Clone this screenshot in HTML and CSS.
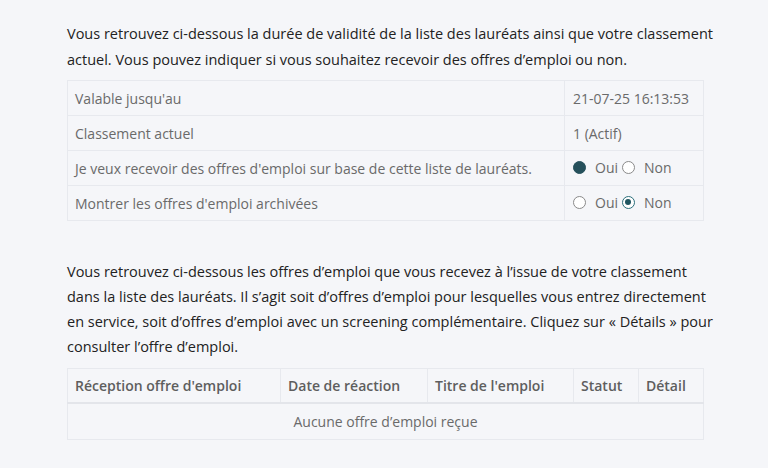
FILE: index.html
```html
<!DOCTYPE html>
<html lang="fr">
<head>
<meta charset="utf-8">
<link rel="stylesheet" href="styles.css">
</head>
<body>
<main class="page">
  <p class="intro">Vous retrouvez ci-dessous la durée de validité de la liste des lauréats ainsi que votre classement actuel. Vous pouvez indiquer si vous souhaitez recevoir des offres d’emploi ou non.</p>
  <table class="info">
    <colgroup><col class="c-label"><col class="c-value"></colgroup>
    <tr><td>Valable jusqu'au</td><td>21-07-25 16:13:53</td></tr>
    <tr><td>Classement actuel</td><td>1 (Actif)</td></tr>
    <tr><td>Je veux recevoir des offres d'emploi sur base de cette liste de lauréats.</td>
      <td><span class="opt"><span class="radio filled"></span><span class="lbl">Oui</span></span><span class="opt"><span class="radio"></span><span class="lbl">Non</span></span></td></tr>
    <tr><td>Montrer les offres d'emploi archivées</td>
      <td><span class="opt"><span class="radio"></span><span class="lbl">Oui</span></span><span class="opt"><span class="radio dot"></span><span class="lbl">Non</span></span></td></tr>
  </table>
  <p class="intro second">Vous retrouvez ci-dessous les offres d’emploi que vous recevez à l’issue de votre classement dans la liste des lauréats. Il s’agit soit d’offres d’emploi pour lesquelles vous entrez directement en service, soit d’offres d’emploi avec un screening complémentaire. Cliquez sur « Détails » pour consulter l’offre d’emploi.</p>
  <table class="offers">
    <colgroup><col class="o1"><col class="o2"><col class="o3"><col class="o4"><col class="o5"></colgroup>
    <thead><tr><th>Réception offre d'emploi</th><th>Date de réaction</th><th>Titre de l'emploi</th><th>Statut</th><th>Détail</th></tr></thead>
    <tbody><tr><td colspan="5" class="empty">Aucune offre d’emploi reçue</td></tr></tbody>
  </table>
</main>
</body>
</html>
```
FILE: styles.css
```css
html, body { margin: 0; padding: 0; }
body {
  background: #f5f6f9;
  font-family: "Open Sans", "Liberation Sans", sans-serif;
  color: #222;
  width: 768px;
  height: 468px;
  overflow: hidden;
}
.page {
  width: 636px;
  margin-left: 67px;
  padding-top: 21px;
}
.intro {
  width: 648px;
  margin: 0 0 7px;
  font-size: 14.5px;
  line-height: 26px;
  color: #222;
}
.intro.second {
  margin: 38px 0 9px;
  line-height: 25px;
}
table {
  width: 636px;
  border-collapse: collapse;
  table-layout: fixed;
}
.info td {
  height: 34px;
  padding: 0 8px;
  border: 1px solid #e7e9ee;
  font-size: 14px;
  color: #6a6a6a;
  white-space: nowrap;
}
.info td:first-child { padding-left: 7px; }
.c-label { width: 497px; }
.c-value { width: 139px; }
.opt { display: inline-flex; align-items: center; }
.radio {
  width: 13px; height: 13px;
  border: 1px solid #8a8a8a;
  border-radius: 50%;
  box-sizing: border-box;
  background: #fff;
  position: relative;
}
.radio.filled { background: #25505b; border-color: #25505b; }
.radio.dot { border: 1.5px solid #2a6e7a; }
.radio.dot::after {
  content: ""; position: absolute;
  left: 2px; top: 2px; width: 6px; height: 6px;
  border-radius: 50%; background: #1f5560;
}
.opt .lbl { margin-left: 9px; margin-right: 4px; }
.offers col.o1 { width: 213px; }
.offers col.o2 { width: 147px; }
.offers col.o3 { width: 146px; }
.offers col.o4 { width: 65px; }
.offers col.o5 { width: 65px; }
.offers th {
  height: 33px;
  padding: 0 7px;
  text-align: left;
  font-size: 14px;
  font-weight: 600;
  color: #5e5e5e;
  border: 1px solid #e7e9ee;
  border-bottom: 2px solid #e3e5ea;
  white-space: nowrap;
}
.offers td.empty {
  height: 33px;
  text-align: center;
  font-size: 14px;
  color: #6a6a6a;
  border: 1px solid #e7e9ee;
}
```
